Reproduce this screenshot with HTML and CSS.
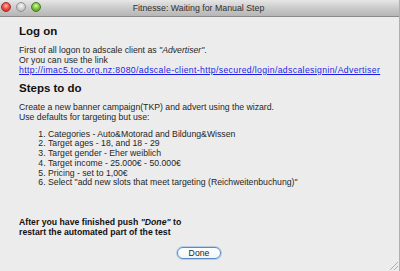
FILE: index.html
```html
<!DOCTYPE html>
<html>
<head>
<meta charset="utf-8">
<link rel="stylesheet" href="styles.css">
</head>
<body>
<div class="window">
  <div class="titlebar">
    <div class="lights">
      <span class="light red"></span>
      <span class="light gray"></span>
      <span class="light green"></span>
    </div>
    <div class="title">Fitnesse: Waiting for Manual Step</div>
  </div>
  <div class="content">
    <h1>Log on</h1>
    <p class="para first">First of all logon to adscale client as <i>"Advertiser"</i>.<br>Or you can use the link<br><a href="#">http://imac5.toc.org.nz:8080/adscale-client-http/secured/login/adscalesignin/Advertiser</a></p>
    <h1 class="h2">Steps to do</h1>
    <p class="para second">Create a new banner campaign(TKP) and advert using the wizard.<br>Use defaults for targeting but use:</p>
    <ol class="steps">
      <li>Categories - Auto&amp;Motorad and Bildung&amp;Wissen</li>
      <li>Target ages - 18, and 18 - 29</li>
      <li>Target gender - Eher weiblich</li>
      <li>Target income - 25.000€ - 50.000€</li>
      <li>Pricing - set to 1,00€</li>
      <li>Select "add new slots that meet targeting (Reichweitenbuchung)"</li>
    </ol>
    <p class="final">After you have finished push <i>"Done"</i> to<br>restart the automated part of the test</p>
    <div class="actions"><button class="done">Done</button></div>
  </div>
  <div class="grip"></div>
</div>
</body>
</html>
```
FILE: styles.css
```css
html, body {
  margin: 0;
  padding: 0;
}
body {
  width: 400px;
  height: 271px;
  overflow: hidden;
  background: #ececec;
  font-family: "Liberation Sans", Arial, sans-serif;
}
.window {
  position: relative;
  width: 400px;
  height: 271px;
  box-sizing: border-box;
  border-right: 1px solid #b0b0b0;
  background: #ececec;
}
.titlebar {
  position: relative;
  height: 16px;
  background: linear-gradient(#e6e6e6, #c8c8c8 55%, #b6b6b6);
  border-bottom: 1px solid #8a8a8a;
  display: flex;
  align-items: center;
  justify-content: center;
}
.lights {
  position: absolute;
  left: 1px;
  top: 2px;
  display: flex;
  gap: 5px;
}
.light {
  width: 10px;
  height: 10px;
  border-radius: 50%;
  box-sizing: border-box;
}
.red {
  background: radial-gradient(circle at 50% 35%, #ffb4ac 0%, #f0524a 45%, #b8221a 100%);
  border: 1px solid #9a3028;
}
.gray {
  background: radial-gradient(circle at 50% 35%, #f6f6f6 0%, #d2d2d2 50%, #a8a8a8 100%);
  border: 1px solid #909090;
}
.green {
  background: radial-gradient(circle at 50% 35%, #def8ae 0%, #82c840 45%, #428c16 100%);
  border: 1px solid #457a24;
}
.title {
  font-size: 8.8px;
  color: #303030;
  line-height: 10px;
  margin-left: -2px;
}
.content {
  padding: 8px 8px 0 19px;
  color: #262626;
}
h1 {
  margin: 0;
  font-size: 11.5px;
  font-weight: bold;
  line-height: 12px;
  color: #111;
}
.para {
  margin: 0;
  font-size: 8.7px;
  line-height: 10px;
}
.first {
  margin-top: 8px;
}
.h2 {
  margin-top: 7px;
}
.second {
  margin-top: 8px;
}
a {
  color: #1c1ce8;
  text-decoration: underline;
  letter-spacing: 0.35px;
  white-space: nowrap;
}
.steps {
  margin: 7.5px 0 0 0;
  padding: 0 0 0 29px;
  font-size: 8.7px;
  line-height: 9.8px;
}
.final {
  margin: 29px 0 0 0;
  font-size: 8.7px;
  font-weight: bold;
  line-height: 10px;
  color: #111;
}
.actions {
  display: flex;
  justify-content: center;
  margin-top: 10px;
  margin-right: 12px;
}
.done {
  font-family: "Liberation Sans", Arial, sans-serif;
  font-size: 8.7px;
  color: #222;
  width: 44px;
  height: 12px;
  padding: 0;
  line-height: 10px;
  border-radius: 7px;
  border: 1px solid #5b8cc6;
  background: linear-gradient(#ffffff, #f1f5fa);
  box-shadow: 0 0 0 1px #b4cdea;
}
.grip {
  position: absolute;
  right: 1px;
  bottom: 1px;
  width: 10px;
  height: 10px;
  background: repeating-linear-gradient(135deg, transparent 0 2px, #b0b0b0 2px 3px);
  clip-path: polygon(100% 0, 100% 100%, 0 100%);
}
```
